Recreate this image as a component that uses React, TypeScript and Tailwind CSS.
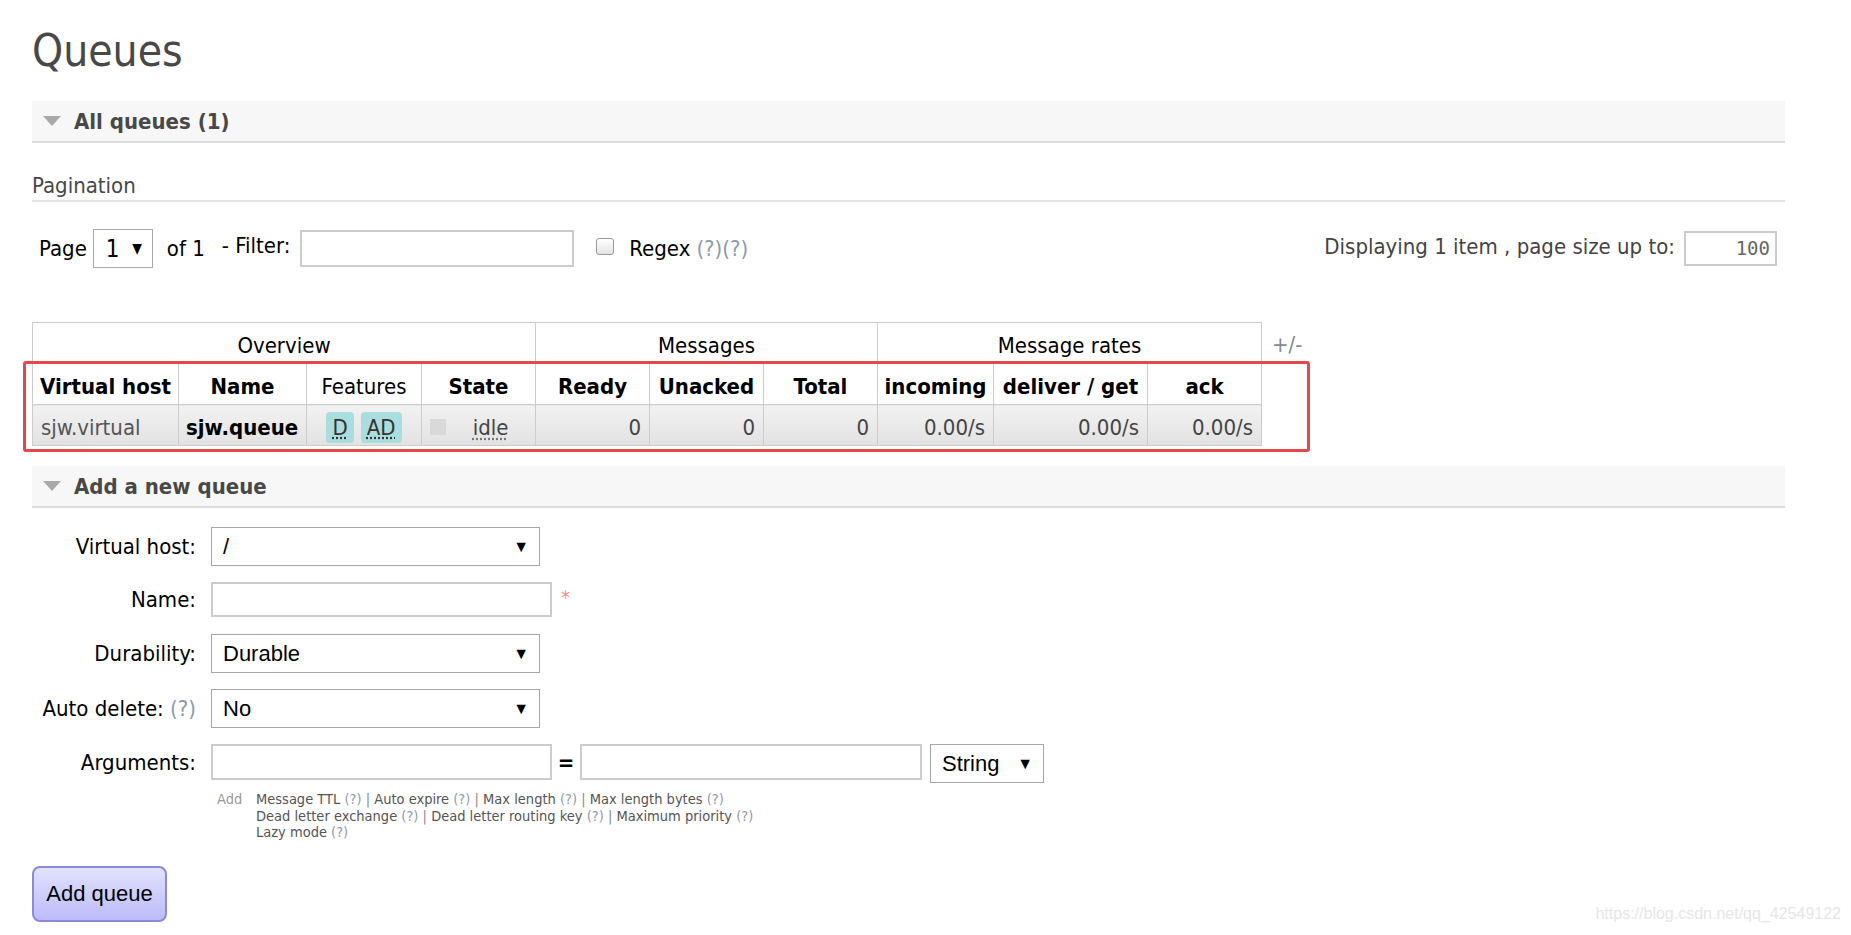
import React from 'react';

const help = 'text-[#8e9aab]';

function Triangle() {
  return (
    <svg width="18" height="10" viewBox="0 0 18 10" className="shrink-0">
      <polygon points="0,0 18,0 9,10" fill="#a9a9a9" />
    </svg>
  );
}

function SectionBar({ title }: { title: string }) {
  return (
    <div className="flex h-[42px] items-center gap-[13px] border-b-2 border-[#dcdcdc] bg-[#f7f7f7] pl-[11px]">
      <Triangle />
      <span className="text-[22px] font-bold text-[#484848]">{title}</span>
    </div>
  );
}

function Help() {
  return <span className={help}>(?)</span>;
}

function FakeSelect({ value, className }: { value: string; className: string }) {
  return (
    <div
      className={`flex items-center justify-between border border-[#a6a6a6] bg-white pl-[11px] pr-[10px] font-['Liberation_Sans',Arial,sans-serif] text-[22px] text-black ${className}`}
    >
      <span>{value}</span>
      <span className="text-[16px]">▼</span>
    </div>
  );
}

function Badge({ label }: { label: string }) {
  return (
    <span className="flex h-[31px] items-center rounded-[4px] bg-[#aadddd] px-[6px] text-[#333]">
      <span className="underline decoration-dotted decoration-[#333] underline-offset-[3px]">{label}</span>
    </span>
  );
}

export default function App() {
  const th = 'whitespace-nowrap border border-[#cccccc] px-[4px] pt-[4px] text-center';
  const td = 'whitespace-nowrap border border-[#cccccc] bg-linear-to-b from-[#f2f2f2] to-[#e2e2e2] px-[8px] pt-[4px]';

  return (
    <div className="relative min-h-[935px] bg-white pl-[32px] pr-[66px] font-['DejaVu_Sans_Condensed','DejaVu_Sans',sans-serif] text-[22px] text-black">
      <h1 className="pt-[26px] pb-[25px] text-[44px] leading-[50px] font-normal text-[#484848]">Queues</h1>

      <SectionBar title="All queues (1)" />

      <div className="mt-[31px] border-b-2 border-[#e2e2e2] pb-[2px] leading-[24px] text-[#484848]">Pagination</div>

      <div className="mt-[27px] flex h-[39px] items-center justify-between">
        <div className="flex items-center pl-[7px]">
          <span>Page</span>
          <div className="ml-[6px] flex h-[39px] w-[60px] items-center justify-between border border-[#aaaaaa] pl-[12px] pr-[10px]">
            <span className="text-[24px]">1</span>
            <span className="text-[14px]">▼</span>
          </div>
          <span className="ml-[14px]">of 1</span>
          <span className="mb-[6px] ml-[17px]">- Filter:</span>
          <div className="ml-[10px] h-[37px] w-[274px] border-2 border-[#cccccc] bg-white" />
          <div className="ml-[22px] mb-[4px] h-[17px] w-[18px] rounded-[3px] border border-[#9a9a9a] bg-linear-to-b from-[#ffffff] to-[#e4e4e4]" />
          <span className="ml-[15px]">Regex</span>
          <span className={`ml-[6px] ${help}`}>(?)(?)</span>
        </div>
        <div className="mr-[8px] flex items-center">
          <span className="mb-[4px] text-[#444]">Displaying 1 item , page size up to:</span>
          <div className="ml-[9px] flex h-[35px] w-[93px] items-center justify-end border-2 border-[#cccccc] pr-[5px] font-['DejaVu_Sans_Mono',monospace] text-[19px] text-[#666]">
            100
          </div>
        </div>
      </div>

      <div className="mt-[54px] flex items-start">
        <div className="relative">
          <table className="w-[1229px] table-fixed border-collapse">
            <colgroup>
              <col className="w-[146px]" />
              <col className="w-[128px]" />
              <col className="w-[115px]" />
              <col className="w-[114px]" />
              <col className="w-[114px]" />
              <col className="w-[114px]" />
              <col className="w-[114px]" />
              <col className="w-[116px]" />
              <col className="w-[154px]" />
              <col className="w-[114px]" />
            </colgroup>
            <thead>
              <tr className="h-[41px]">
                <th colSpan={4} className={`${th} font-normal`}>Overview</th>
                <th colSpan={3} className={`${th} font-normal`}>Messages</th>
                <th colSpan={3} className={`${th} font-normal`}>Message rates</th>
              </tr>
              <tr className="h-[41px]">
                <th className={`${th} font-bold`}>Virtual host</th>
                <th className={`${th} font-bold`}>Name</th>
                <th className={`${th} font-normal`}>Features</th>
                <th className={`${th} font-bold`}>State</th>
                <th className={`${th} font-bold`}>Ready</th>
                <th className={`${th} font-bold`}>Unacked</th>
                <th className={`${th} font-bold`}>Total</th>
                <th className={`${th} font-bold`}>incoming</th>
                <th className={`${th} font-bold`}>deliver / get</th>
                <th className={`${th} font-bold`}>ack</th>
              </tr>
            </thead>
            <tbody>
              <tr className="h-[41px]">
                <td className={`${td} text-left text-[#555]`}>sjw.virtual</td>
                <td className={`${td} pl-[7px] pr-0 text-left font-bold`}>sjw.queue</td>
                <td className={td}>
                  <div className="flex items-center justify-center gap-[7px]">
                    <Badge label="D" />
                    <Badge label="AD" />
                  </div>
                </td>
                <td className={`${td} pl-[8px] pr-0`}>
                  <div className="flex items-center">
                    <span className="h-[16px] w-[16px] bg-[#d9d9d9]" />
                    <span className="flex-1 text-center text-[#444] underline decoration-dotted decoration-[#777] underline-offset-[4px]">idle</span>
                  </div>
                </td>
                <td className={`${td} text-right text-[#444]`}>0</td>
                <td className={`${td} text-right text-[#444]`}>0</td>
                <td className={`${td} text-right text-[#444]`}>0</td>
                <td className={`${td} text-right text-[#444]`}>0.00/s</td>
                <td className={`${td} text-right text-[#444]`}>0.00/s</td>
                <td className={`${td} text-right text-[#444]`}>0.00/s</td>
              </tr>
            </tbody>
          </table>
          <div className="pointer-events-none absolute left-[-9px] top-[39px] h-[91px] w-[1287px] rounded-[3px] border-[3px] border-[#e5474d]" />
        </div>
        <span className="ml-[10px] flex h-[41px] items-center pt-[4px] text-[#888]">+/-</span>
      </div>

      <div className="mt-[20px]">
        <SectionBar title="Add a new queue" />
      </div>

      <div className="flex flex-col">
        <div className="mt-[19px] flex h-[39px] items-center">
          <label className="w-[164px] text-right">Virtual host:</label>
          <FakeSelect value="/" className="ml-[15px] h-[39px] w-[329px]" />
        </div>
        <div className="mt-[16px] flex h-[35px] items-center">
          <label className="w-[164px] text-right">Name:</label>
          <div className="ml-[15px] h-[35px] w-[341px] border-2 border-[#cccccc]" />
          <span className="ml-[9px] self-start pt-[5px] text-[20px] leading-[20px] text-[#ff8a8a]">*</span>
        </div>
        <div className="mt-[17px] flex h-[39px] items-center">
          <label className="w-[164px] text-right">Durability:</label>
          <FakeSelect value="Durable" className="ml-[15px] h-[39px] w-[329px]" />
        </div>
        <div className="mt-[16px] flex h-[39px] items-center">
          <label className="w-[164px] text-right">
            Auto delete: <Help />
          </label>
          <FakeSelect value="No" className="ml-[15px] h-[39px] w-[329px]" />
        </div>
        <div className="mt-[16px] flex h-[39px] items-start">
          <label className="flex h-[36px] w-[164px] items-center justify-end">Arguments:</label>
          <div className="ml-[15px] h-[36px] w-[341px] border-2 border-[#cccccc]" />
          <span className="flex h-[36px] w-[28px] items-center justify-center font-bold">=</span>
          <div className="h-[36px] w-[342px] border-2 border-[#cccccc]" />
          <FakeSelect value="String" className="ml-[8px] h-[39px] w-[114px]" />
        </div>

        <div className="mt-[8px] ml-[185px] flex text-[14.5px] leading-[16.5px] text-[#555]">
          <span className="w-[39px] text-[#999]">Add</span>
          <div className="flex flex-col">
            <span>
              Message TTL <Help /> <span className="text-[#888]">|</span> Auto expire <Help />{' '}
              <span className="text-[#888]">|</span> Max length <Help /> <span className="text-[#888]">|</span> Max length bytes{' '}
              <Help />
            </span>
            <span>
              Dead letter exchange <Help /> <span className="text-[#888]">|</span> Dead letter routing key <Help />{' '}
              <span className="text-[#888]">|</span> Maximum priority <Help />
            </span>
            <span>
              Lazy mode <Help />
            </span>
          </div>
        </div>

        <div className="mt-[25px]">
          <button
            type="button"
            className="h-[56px] w-[135px] rounded-[8px] border-2 border-[#8a8ad8] bg-linear-to-b from-[#e2e2fe] to-[#bbbbfa] font-['Liberation_Sans',Arial,sans-serif] text-[22px] text-black"
          >
            Add queue
          </button>
        </div>
      </div>

      <span className="absolute right-[10px] top-[905px] font-['Liberation_Sans',Arial,sans-serif] text-[16px] leading-[18px] text-[#e6e6e6]">
        https://blog.csdn.net/qq_42549122
      </span>
    </div>
  );
}
